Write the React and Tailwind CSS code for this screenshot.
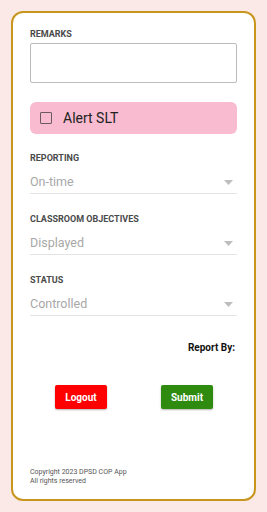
import { useState } from 'react'

function SelectField({ label, value }) {
  return (
    <div>
      <div className="text-[9px] font-bold text-[#4a4a4a] leading-[12px]">{label}</div>
      <div className="mt-[8px] h-[22px] flex items-center justify-between border-b border-[#e4e4e4]">
        <span className="text-[12.5px] text-[#a8a8a8]">{value}</span>
        <svg width="9" height="5" viewBox="0 0 9 5" className="mr-[4px]">
          <path d="M0 0 L9 0 L4.5 5 Z" fill="#bdbdbd" />
        </svg>
      </div>
    </div>
  )
}

export default function App() {
  const [alert, setAlert] = useState(false)
  const [remarks, setRemarks] = useState('')

  return (
    <div className="w-[267px] h-[512px] bg-[#fbe9e7] pt-[11px] px-[11px] font-['Roboto',sans-serif]">
      <div className="h-[490px] w-[245px] bg-white border-[2.5px] border-[#c8961e] rounded-[12px] px-[17px] pt-[15px] flex flex-col">
        <div className="text-[9px] font-bold text-[#4a4a4a] leading-[12px]">REMARKS</div>
        <textarea
          value={remarks}
          onChange={(e) => setRemarks(e.target.value)}
          className="mt-[3px] h-[40px] w-full border border-[#bbb] rounded-[2px] resize-none outline-none"
        />

        <div
          onClick={() => setAlert(!alert)}
          className="mt-[19px] h-[32px] bg-[#f8bbd0] rounded-[6px] flex items-center pl-[10px]"
        >
          <div className="w-[12px] h-[12px] border-[1.5px] border-[#6d5a60] rounded-[1px]" />
          <span className="ml-[11px] text-[14px] text-[#222]">Alert SLT</span>
        </div>

        <div className="mt-[18px] flex flex-col gap-[19px]">
          <SelectField label="REPORTING" value="On-time" />
          <SelectField label="CLASSROOM OBJECTIVES" value="Displayed" />
          <SelectField label="STATUS" value="Controlled" />
        </div>

        <div className="mt-[26px] text-right pr-[2px] text-[10px] leading-[12px] font-bold text-[#111]">Report By:</div>

        <div className="mt-[31px] flex">
          <button className="ml-[25px] w-[52px] h-[24px] bg-[#ff0000] rounded-[2px] text-white text-[10px] font-bold shadow-[0_1px_2px_rgba(0,0,0,0.3)]">
            Logout
          </button>
          <button className="ml-[54px] w-[52px] h-[24px] bg-[#2e8b10] rounded-[2px] text-white text-[10px] font-bold shadow-[0_1px_2px_rgba(0,0,0,0.3)]">
            Submit
          </button>
        </div>

        <div className="mt-auto mb-[14px] text-[7px] leading-[8.5px] text-[#555]">
          <div>Copyright 2023 DPSD COP App</div>
          <div>All rights reserved</div>
        </div>
      </div>
    </div>
  )
}
